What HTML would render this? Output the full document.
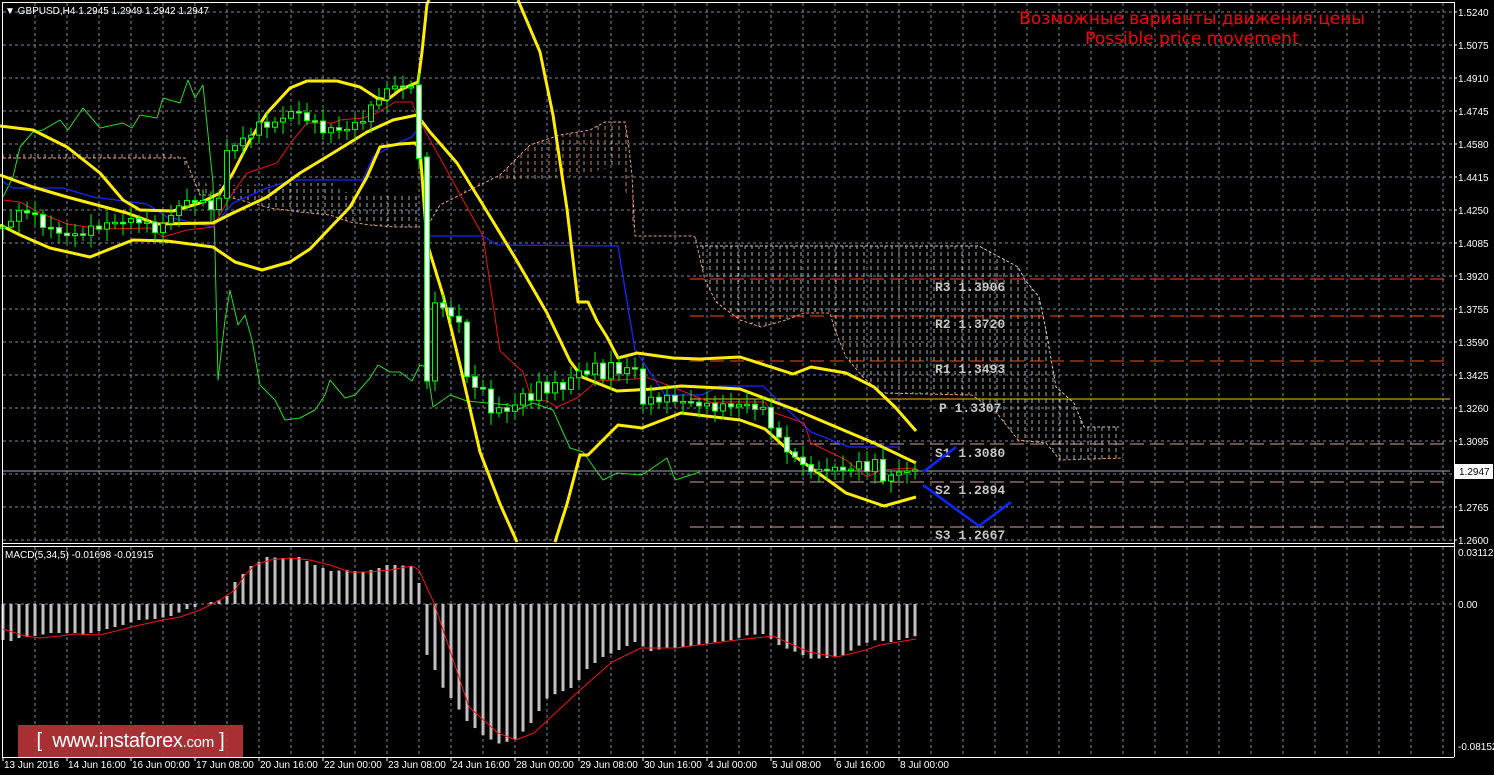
<!DOCTYPE html>
<html><head><meta charset="utf-8"><style>
html,body{margin:0;padding:0;background:#000;}
body{width:1494px;height:775px;overflow:hidden;position:relative;font-family:"Liberation Sans",sans-serif;}
svg{position:absolute;left:0;top:0;}
.ax{font-family:"Liberation Sans",sans-serif;font-size:10px;fill:#fff;}
.pv{font-family:"Liberation Mono",monospace;font-size:13px;font-weight:bold;fill:#c8c8c8;}
#logo{position:absolute;left:18px;top:725px;width:225px;height:32px;background:rgba(180,52,56,0.93);color:#fff;font-size:20px;line-height:32px;text-align:center;font-family:"Liberation Sans",sans-serif;letter-spacing:-0.3px;}
#logo small{font-size:15px;}
</style></head><body>
<svg id="s" width="1494" height="775" xmlns="http://www.w3.org/2000/svg">
<defs>
<pattern id="hw" width="7" height="7" patternUnits="userSpaceOnUse"><line x1="3" y1="0" x2="3" y2="4" stroke="#c8c8c8" stroke-width="1" stroke-opacity="0.85"/></pattern>
<pattern id="ho" width="7" height="7" patternUnits="userSpaceOnUse"><line x1="3" y1="0" x2="3" y2="4" stroke="#e8a070" stroke-width="1" stroke-opacity="0.85"/></pattern>
</defs>
<g id="grid"></g>
<g id="cloud">
<polygon fill="url(#hw)" points="3,152 60,150 175,152 182,162 190,175 200,183 235,185 290,183 335,183 345,192 370,194 420,196 420,227 395,227 370,225 350,222 330,215 300,212 270,208 240,200 220,195 200,195 185,158 100,158 3,158"/>
<polyline fill="none" stroke="#e8a070" stroke-dasharray="3,2" points="3,158 100,158 185,158 200,195 220,195 240,200 270,208 300,212 330,215 350,222 370,225 395,227 420,227"/>
<polygon fill="url(#ho)" points="428,225 440,205 460,195 480,185 500,175 515,160 530,145 560,135 590,130 605,122 625,122 628,140 632,175 635,235 620,165 600,170 580,175 560,178 520,180 500,180 480,182 460,193 440,205 430,222"/>
<polyline fill="none" stroke="#e8a070" stroke-dasharray="3,2" points="428,225 440,205 460,195 480,185 500,175 515,160 530,145 560,135 590,130 605,122 625,122 628,140 632,175 635,236 692,236 695,237 705,280 716,302 740,320 761,327 786,320 804,313 830,313 835,330 846,357 863,377 881,393 972,395 996,412 1018,440 1046,443 1060,460 1123,458"/>
<polygon fill="url(#hw)" points="700,246 979,246 1018,267 1025,280 1039,297 1046,330 1056,387 1074,403 1084,427 1119,427 1123,458 1060,460 1046,443 1018,440 996,412 972,395 881,393 863,377 846,357 835,330 830,313 804,313 786,320 761,327 740,320 716,302 705,280 695,237"/>
<polyline fill="none" stroke="#c8c8c8" stroke-dasharray="3,2" points="700,246 979,246 1018,267 1025,280 1039,297 1046,330 1056,387 1074,403 1084,427 1119,427"/>
</g>
<g id="piv" fill="none">
<line x1="690" y1="279" x2="1450" y2="279" stroke="#ff4a10" stroke-dasharray="14,6"/>
<line x1="690" y1="316" x2="1450" y2="316" stroke="#ff4a10" stroke-dasharray="14,6"/>
<line x1="690" y1="361" x2="1450" y2="361" stroke="#ff4a10" stroke-dasharray="14,6"/>
<line x1="690" y1="399" x2="1450" y2="399" stroke="#f0c020"/>
<line x1="690" y1="444" x2="1450" y2="444" stroke="#d8a098" stroke-dasharray="14,6"/>
<line x1="690" y1="482" x2="1450" y2="482" stroke="#d8a098" stroke-dasharray="14,6"/>
<line x1="690" y1="527" x2="1450" y2="527" stroke="#d8a098" stroke-dasharray="14,6"/>
<line x1="3" y1="471" x2="1450" y2="471" stroke="#a0a8b0"/>
</g>
<g id="lines" fill="none"></g>
<g id="cand"></g>
<g id="macd"></g>
<g>
<text class="pv" x="935" y="291">R3  1.3906</text>
<text class="pv" x="935" y="328">R2  1.3720</text>
<text class="pv" x="935" y="373">R1  1.3493</text>
<text class="pv" x="939" y="412">P  1.3307</text>
<text class="pv" x="935" y="457">S1  1.3080</text>
<text class="pv" x="935" y="494">S2  1.2894</text>
<text class="pv" x="935" y="539">S3  1.2667</text>
</g>
<polyline fill="none" stroke="#0a28ff" stroke-width="2.5" points="923,472 956,447"/>
<polyline fill="none" stroke="#0a28ff" stroke-width="2.5" points="923,485 979,526 1011,502"/>
<g stroke="#fff" fill="none">
<line x1="2" y1="2.5" x2="1454" y2="2.5"/>
<line x1="2.5" y1="2" x2="2.5" y2="757"/>
<line x1="1454.5" y1="2" x2="1454.5" y2="757"/>
<line x1="2" y1="543.5" x2="1454" y2="543.5"/>
<line x1="2" y1="546.5" x2="1454" y2="546.5"/>
<line x1="2" y1="757.5" x2="1454" y2="757.5"/>
</g>
<g id="axis"></g>
<text x="5" y="14" class="ax">▼ GBPUSD,H4  1.2945 1.2949 1.2942 1.2947</text>
<text x="5" y="558" class="ax">MACD(5,34,5) -0.01698 -0.01915</text>
<text x="1192" y="24" text-anchor="middle" style="font-family:'DejaVu Sans','Liberation Sans',sans-serif;font-size:17px;fill:#ff0000">Возможные варианты движения цены</text>
<text x="1192" y="44" text-anchor="middle" style="font-family:'DejaVu Sans','Liberation Sans',sans-serif;font-size:17px;fill:#ff0000">Possible price movement</text>
<rect x="1455" y="464" width="38" height="15" fill="#fff"/>
<text x="1459" y="475" style="font-size:10px;fill:#000;font-family:'Liberation Sans',sans-serif">1.2947</text>
</svg>
<div id="logo">[ &nbsp;www.instaforex<small>.com</small> ]</div>
<script>
var NS="http://www.w3.org/2000/svg";
function el(p,t,a){var e=document.createElementNS(NS,t);for(var k in a)e.setAttribute(k,a[k]);document.getElementById(p).appendChild(e);return e;}
function pl(pts,c,w){el("lines","polyline",{points:pts.map(function(p){return p.join(",")}).join(" "),stroke:c,"stroke-width":w,"stroke-linejoin":"round"});}
function interp(P,x){if(x<=P[0][0])return P[0][1];for(var i=1;i<P.length;i++){if(x<=P[i][0]){var a=P[i-1],b=P[i];return a[1]+(b[1]-a[1])*(x-a[0])/(b[0]-a[0]);}}return P[P.length-1][1];}
(function(){
for(var k=0;k<=44;k++){var x=35+32*k;el("grid","line",{x1:x,y1:3,x2:x,y2:543,stroke:"#7a8898","stroke-dasharray":"3,3"});el("grid","line",{x1:x,y1:547,x2:x,y2:757,stroke:"#7a8898","stroke-dasharray":"3,3"});}
var prices=["1.5240","1.5075","1.4910","1.4745","1.4580","1.4415","1.4250","1.4085","1.3920","1.3755","1.3590","1.3425","1.3260","1.3095","1.2930","1.2765","1.2600"];
for(var k=0;k<=16;k++){var y=12+33*k;el("grid","line",{x1:3,y1:y,x2:1454,y2:y,stroke:"#7a8898","stroke-dasharray":"3,3"});el("axis","line",{x1:1454,y1:y,x2:1457,y2:y,stroke:"#fff"});if(k!=14){var t=el("axis","text",{x:1458,y:y+4,"class":"ax"});t.textContent=prices[k];}}
el("grid","line",{x1:3,y1:604,x2:1454,y2:604,stroke:"#7a8898","stroke-dasharray":"3,3"});
[["0.03112",552],["0.00",604],["-0.08152",746]].forEach(function(a){var t=el("axis","text",{x:1458,y:a[1]+4,"class":"ax"});t.textContent=a[0];});
var dates=["13 Jun 2016","14 Jun 16:00","16 Jun 00:00","17 Jun 08:00","20 Jun 16:00","22 Jun 00:00","23 Jun 08:00","24 Jun 16:00","28 Jun 00:00","29 Jun 08:00","30 Jun 16:00","4 Jul 00:00","5 Jul 08:00","6 Jul 16:00","8 Jul 00:00"];
dates.forEach(function(d,i){var x=3+64*i;el("axis","line",{x1:x,y1:757,x2:x,y2:761,stroke:"#fff"});var t=el("axis","text",{x:x+1,y:768,"class":"ax"});t.textContent=d;});
pl([[3,197],[13,177],[20,147],[33,132],[43,130],[60,120],[68,130],[83,108],[100,128],[123,123],[132,128],[140,115],[157,118],[163,98],[180,103],[188,80],[195,98],[203,85],[213,183],[215,250],[218,380],[225,320],[230,290],[238,325],[245,315],[252,340],[260,385],[275,400],[285,420],[300,418],[315,410],[325,395],[330,380],[345,398],[355,395],[370,378],[378,365],[390,372],[400,372],[412,381],[420,365],[427,367],[433,407],[450,395],[467,401],[487,403],[510,405],[517,410],[533,403],[553,410],[570,448],[583,452],[603,480],[617,473],[642,475],[667,458],[675,480],[700,472]],"#22dd22",1);
pl([[3,182],[13,188],[63,188],[93,197],[147,204],[167,217],[213,227],[233,203],[267,188],[293,180],[363,180],[373,157],[393,145],[412,137],[418,129],[427,236],[483,236],[497,245],[618,246],[635,350],[665,395],[702,395],[719,386],[763,386],[811,432],[849,447],[900,447]],"#1428ff",1.3);
pl([[3,200],[20,202],[40,213],[67,224],[100,229],[150,228],[163,237],[187,230],[213,227],[230,197],[247,173],[277,163],[293,140],[307,123],[333,123],[340,120],[363,118],[377,113],[395,102],[412,102],[418,118],[483,236],[500,351],[523,372],[532,400],[547,401],[557,407],[577,398],[597,381],[637,379],[646,377],[670,386],[712,403],[719,402],[765,402],[772,412],[804,423],[811,443],[846,460],[867,477],[881,470],[895,469],[916,468]],"#ee1010",1);
var Y="#ffee00",W=3;
pl([[0,126],[33,130],[67,147],[100,173],[123,200],[140,210],[173,211],[200,203],[220,193],[233,173],[250,140],[267,113],[290,88],[307,81],[337,81],[360,87],[377,98],[387,100],[400,90],[418,82],[422,52],[427,4],[429,0]],Y,W);
pl([[0,175],[33,187],[67,197],[127,213],[157,224],[213,223],[233,213],[267,197],[300,173],[333,153],[367,132],[393,120],[417,115],[430,132],[457,163],[483,205],[517,261],[547,313],[570,361],[582,377],[617,391],[653,389],[681,386],[740,389],[796,410],[874,443],[916,463]],Y,W);
pl([[0,225],[20,235],[50,248],[90,257],[110,249],[133,240],[167,241],[213,247],[235,262],[262,270],[290,262],[310,249],[350,207],[367,177],[380,147],[400,144],[415,143],[420,149],[427,243],[443,295],[460,365],[480,452],[500,504],[517,542]],Y,W);
pl([[518,0],[540,52],[553,115],[567,209],[578,302],[588,302],[597,321],[607,337],[618,358],[637,353],[673,358],[700,359],[740,357],[793,374],[811,367],[846,373],[874,387],[895,407],[916,431]],Y,W);
pl([[555,542],[567,504],[580,455],[588,455],[600,443],[618,425],[642,428],[681,413],[740,420],[765,429],[796,457],[846,493],[884,506],[916,497]],Y,W);
var CP=[[3,227],[19,213],[27,210],[43,225],[59,233],[75,236],[91,229],[115,222],[139,220],[155,230],[163,225],[179,205],[195,200],[211,207],[219,200],[227,150],[243,140],[259,125],[275,124],[291,111],[307,118],[323,130],[347,129],[363,119],[379,97],[395,85],[411,88],[419,156],[427,384],[435,300],[443,310],[451,315],[459,322],[467,378],[475,385],[483,392],[491,410],[499,410],[507,410],[515,405],[523,395],[531,398],[539,385],[547,390],[555,385],[563,388],[571,378],[579,372],[587,372],[595,366],[603,376],[611,365],[619,372],[627,368],[635,370],[643,402],[651,400],[667,398],[683,402],[699,404],[715,408],[731,405],[747,405],[763,410],[771,425],[779,440],[787,450],[795,458],[803,465],[811,470],[819,472],[827,468],[835,470],[843,468],[851,470],[859,462],[867,470],[875,462],[883,478],[891,478],[899,470],[907,472],[915,470]];
var prev=interp(CP,3);
for(var i=0;i<=114;i++){var x=3+8*i;var c=interp(CP,x)+Math.sin(i*2.7)*3;var o=prev;if(x==419){o=85;}if(x==427){o=157;}
var bt=Math.min(o,c),bb=Math.max(o,c);if(bb-bt<1.5){bb=bt+1.5;}
var hi=bt-3-Math.abs(Math.sin(i*1.3))*9,lo=bb+3+Math.abs(Math.cos(i*1.7))*9;
el("cand","line",{x1:x,y1:hi,x2:x,y2:lo,stroke:"#00ff00"});
el("cand","rect",{x:x-2.5,y:bt,width:5,height:bb-bt,fill:(c>o?"#fff":"#000"),stroke:"#00ff00","stroke-width":1});
prev=c;}
var HB=[[3,640],[11,641],[19,638],[35,636],[51,633],[75,633],[83,635],[91,633],[107,629],[123,625],[139,620],[155,619],[171,616],[187,609],[195,607],[203,604],[211,602],[219,600],[227,596],[235,582],[243,574],[251,566],[259,562],[267,557],[283,558],[299,557],[315,565],[331,571],[347,570],[363,572],[379,568],[387,565],[395,565],[411,566],[419,583],[426,653],[435,670],[444,690],[451,698],[467,721],[484,736],[500,744],[516,739],[532,722],[548,697],[571,688],[579,680],[587,669],[603,657],[619,650],[635,642],[651,651],[667,648],[684,647],[700,645],[716,642],[732,640],[748,635],[764,634],[773,640],[780,646],[796,652],[812,659],[828,658],[844,655],[860,645],[876,640],[891,642],[907,638],[916,636]];
for(var i=0;i<=114;i++){var x=3+8*i;var v=interp(HB,x);var t1=Math.min(v,604),b1=Math.max(v,604);el("macd","rect",{x:x-1.5,y:t1,width:3,height:b1-t1,fill:"#c0c0c0"});}
var SG=[[3,629],[25,636],[40,638],[60,636],[75,634],[100,635],[120,630],[140,625],[163,620],[180,617],[200,610],[220,600],[235,590],[245,575],[255,565],[270,560],[290,558],[310,560],[330,565],[350,572],[370,572],[390,570],[412,566],[419,570],[434,603],[469,707],[498,733],[516,740],[534,733],[580,690],[612,662],[641,648],[676,648],[737,640],[773,636],[809,652],[837,657],[866,650],[880,645],[916,639]];
el("macd","polyline",{points:SG.map(function(p){return p.join(",")}).join(" "),fill:"none",stroke:"#ff1010","stroke-width":1});
})();
</script>
</body></html>
